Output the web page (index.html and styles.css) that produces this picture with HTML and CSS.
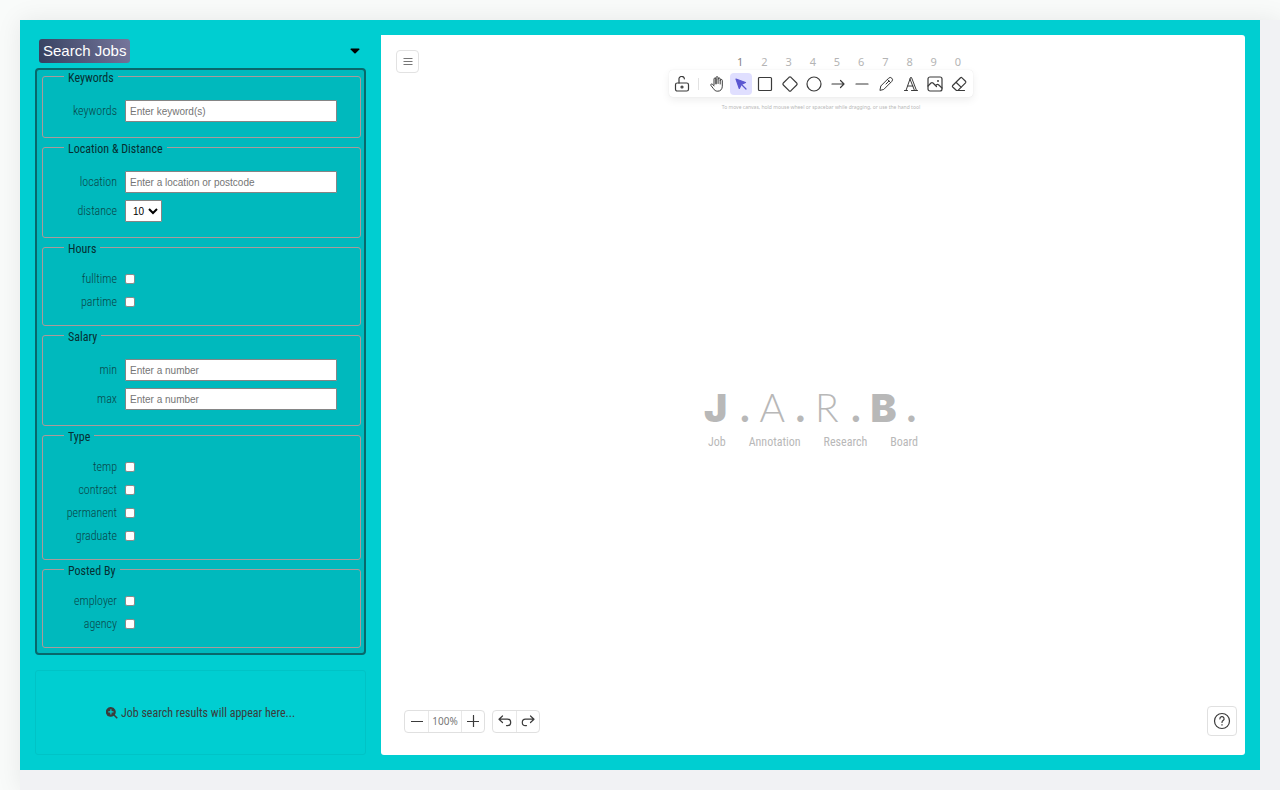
FILE: index.html
```html
<!DOCTYPE html>
<html lang="en">
<head>
<meta charset="utf-8">
<meta name="viewport" content="width=device-width, initial-scale=1">
<title>J.A.R.B.</title>
<link rel="stylesheet" href="styles.css">
</head>
<body>
<div class="page">
<main class="app">
  <section class="sidebar">
    <header class="search-head">
      <button class="search-btn" type="button">Search Jobs</button>
      <button class="toggle" type="button" aria-label="Collapse search form"><svg width="10" height="6" viewBox="0 0 10 6"><path d="M1 .5h8a.6.6 0 0 1 .4 1L5.6 5.3a.9.9 0 0 1-1.2 0L.6 1.500a.6.6 0 0 1 .4-1z"/></svg></button>
    </header>
    <form class="filters">
      <fieldset class="group"><legend>Keywords</legend>
        <div class="row"><label for="keywords">keywords</label><input class="text" id="keywords" type="text" placeholder="Enter keyword(s)"></div>
      </fieldset>
      <fieldset class="group"><legend>Location &amp; Distance</legend>
        <div class="row"><label for="location">location</label><input class="text" id="location" type="text" placeholder="Enter a location or postcode"></div>
        <div class="row"><label for="distance">distance</label><select class="select" id="distance"><option>10</option></select></div>
      </fieldset>
      <fieldset class="group"><legend>Hours</legend>
        <div class="row"><label for="fulltime">fulltime</label><input class="check" id="fulltime" type="checkbox"></div>
        <div class="row"><label for="partime">partime</label><input class="check" id="partime" type="checkbox"></div>
      </fieldset>
      <fieldset class="group"><legend>Salary</legend>
        <div class="row"><label for="min">min</label><input class="text" id="min" type="text" placeholder="Enter a number"></div>
        <div class="row"><label for="max">max</label><input class="text" id="max" type="text" placeholder="Enter a number"></div>
      </fieldset>
      <fieldset class="group"><legend>Type</legend>
        <div class="row"><label for="temp">temp</label><input class="check" id="temp" type="checkbox"></div>
        <div class="row"><label for="contract">contract</label><input class="check" id="contract" type="checkbox"></div>
        <div class="row"><label for="permanent">permanent</label><input class="check" id="permanent" type="checkbox"></div>
        <div class="row"><label for="graduate">graduate</label><input class="check" id="graduate" type="checkbox"></div>
      </fieldset>
      <fieldset class="group"><legend>Posted By</legend>
        <div class="row"><label for="employer">employer</label><input class="check" id="employer" type="checkbox"></div>
        <div class="row"><label for="agency">agency</label><input class="check" id="agency" type="checkbox"></div>
      </fieldset>
    </form>
    <section class="results">
      <svg width="12" height="12" viewBox="0 0 12 12"><path fill="#3b3b3b" fill-rule="evenodd" d="M4.900 0a4.900 4.900 0 0 1 3.900 7.800l3 2.900-1.100 1.100-3-3A4.900 4.900 0 1 1 4.900 0zM4.300 2.300v2h-2v1.200h2v2h1.200v-2h2V4.300h-2v-2z"/></svg>
      <span>Job search results will appear here...</span>
    </section>
  </section>

  <section class="board">
    <header class="board-top">
      <button class="menu" type="button" aria-label="Menu"><svg width="10" height="10" viewBox="0 0 10 10"><path d="M.5 1.500h9M.5 4.500h9M.5 7.500h9" stroke="#777"/></svg></button>
      <div class="tools-wrap">
        <div class="island">
          <button class="tool" type="button" aria-label="Lock"><svg class="icon" viewBox="0 0 16 16"><rect x="1.500" y="7" width="13" height="8" rx="1.800"/><path d="M5 7V3.500a2.700 2.700 0 0 1 5.400-.7"/><circle cx="8" cy="11" r="1"/></svg></button>
          <span class="divider"></span>
          <div class="tools">
            <button class="tool" type="button" aria-label="Hand"><svg class="icon thinner" viewBox="0 0 16 16"><path d="M5 9V3a1 1 0 0 1 2 0v5M7 7.500V1.700a1 1 0 0 1 2.100 0v5.800M9.100 3a1 1 0 0 1 2.100 0v5M11.200 4.500a1 1 0 0 1 2.100 0v5.700c0 3-1.800 5-4.500 5-2.300 0-3.300-.9-4.400-2.600L1.900 9.400c-.6-1 .6-1.800 1.400-1.200L5 9.800"/></svg></button>
            <button class="tool active" type="button" aria-label="Selection"><b class="key">1</b><svg class="icon" viewBox="0 0 16 16"><path class="solid" d="M3 3l3.300 9.500 2-4 4.200-2z"/><path d="M8.500 8.500l4.500 4.500"/></svg></button>
            <button class="tool" type="button" aria-label="Rectangle"><b class="key">2</b><svg class="icon" viewBox="0 0 16 16"><rect x="1.500" y="1.500" width="13" height="13" rx="1"/></svg></button>
            <button class="tool" type="button" aria-label="Diamond"><b class="key">3</b><svg class="icon" viewBox="0 0 16 16"><path d="M7 1.300q1-.8 2 0L14.700 7q.8 1 0 2L9 14.700q-1 .8-2 0L1.300 9q-.8-1 0-2z"/></svg></button>
            <button class="tool" type="button" aria-label="Ellipse"><b class="key">4</b><svg class="icon" viewBox="0 0 16 16"><circle cx="8" cy="8" r="7"/></svg></button>
            <button class="tool" type="button" aria-label="Arrow"><b class="key">5</b><svg class="icon" viewBox="0 0 16 16"><path d="M2 8h12M10.500 4.500L14 8l-3.500 3.500"/></svg></button>
            <button class="tool" type="button" aria-label="Line"><b class="key">6</b><svg class="icon" viewBox="0 0 16 16"><path d="M2 8h12"/></svg></button>
            <button class="tool" type="button" aria-label="Draw"><b class="key">7</b><svg class="icon thinner" viewBox="0 0 16 16"><path d="M2 14l.8-4 7.800-7.800a2.200 2.200 0 0 1 3.200 3.200L6 13.200zM9.500 3.500l3 3M8 8l3-3"/></svg></button>
            <button class="tool" type="button" aria-label="Text"><b class="key">8</b><svg class="icon thinner" viewBox="0 0 16 16"><path d="M1.500 14.500h3M8.500 14.500h6M3 14.500L7.500 1.500h1L13.500 14.500M7 3l4.500 11.500M5 10h5"/></svg></button>
            <button class="tool" type="button" aria-label="Image"><b class="key">9</b><svg class="icon" viewBox="0 0 16 16"><rect x="1" y="1" width="14" height="14" rx="2"/><path d="M1 10l3-3q1-.8 2 0l3.500 3.500M8.500 9.500l1-.8q1-.7 2 0L15 12"/><circle cx="11" cy="5" r=".4"/></svg></button>
            <button class="tool" type="button" aria-label="Eraser"><b class="key">0</b><svg class="icon" viewBox="0 0 16 16"><path d="M13.500 14.500H5.500L1.700 11q-.7-.8 0-1.500L9.500 1.800q.8-.7 1.500 0l3.500 3.400q.7.800 0 1.600L7 14.300M5 6.200l5.300 5.200"/></svg></button>
          </div>
        </div>
        <p class="hint">To move canvas, hold mouse wheel or spacebar while dragging, or use the hand tool</p>
      </div>
    </header>

    <div class="canvas">
      <div class="brand">
        <div class="letters">
          <span class="heavy">J<b class="dot">.</b></span><span class="thin">A<b class="dot">.</b></span><span class="thin">R<b class="dot">.</b></span><span class="heavy">B<b class="dot">.</b></span>
        </div>
        <div class="words"><span>Job</span><span>Annotation</span><span>Research</span><span>Board</span></div>
      </div>
    </div>

    <footer class="board-bottom">
      <div class="zoom">
        <button type="button" aria-label="Zoom out"><svg width="12" height="12" viewBox="0 0 12 12"><path d="M.5 6.500h11"/></svg></button>
        <button class="percent" type="button">100%</button>
        <button type="button" aria-label="Zoom in"><svg width="12" height="12" viewBox="0 0 12 12"><path d="M0 6.500h12M6.500.5v12"/></svg></button>
      </div>
      <div class="zoom">
        <button type="button" aria-label="Undo"><svg width="14" height="12" viewBox="0 0 14 12"><path d="M4.500 7.500L1 4.200 4.500 1M1 4.200h8.500a3.200 3.200 0 0 1 0 6.400H8.500"/></svg></button>
        <button type="button" aria-label="Redo"><svg width="14" height="12" viewBox="0 0 14 12"><path d="M9.500 7.500L13 4.200 9.500 1M13 4.200H4.500a3.200 3.200 0 0 0 0 6.400h1"/></svg></button>
      </div>
      <button class="help" type="button" aria-label="Help"><svg width="18" height="18" viewBox="0 0 18 18"><circle cx="9" cy="9" r="7.500"/><path d="M6.900 6.900A2.100 2.100 0 1 1 10 8.600q-1 .6-1 1.800M9 12.500v.6"/></svg></button>
    </footer>
  </section>
</main>
</div>
</body>
</html>
```
FILE: styles.css
```css
* { box-sizing: border-box; }
body {
  margin: 0;
  padding: 20px 0 0 20px;
  min-height: 100vh;
  background: #f9fbfa;
  overflow-x: hidden;
  font-family: "Roboto Condensed", Roboto, "Liberation Sans", sans-serif;
  font-size: 12px;
  line-height: 16px;
  color: #0a4447;
}
button, input, select { font-family: "Liberation Sans", sans-serif; margin: 0; }
button { border: 0; padding: 0; background: none; color: inherit; }
svg { display: block; flex: none; }

.page {
  min-height: calc(100vh - 20px);
  padding: 0 20px 20px 0;
  background: #f1f2f4;
  box-shadow: 0 0 24px rgba(0, 0, 0, 0.08);
}
.app {
  display: flex;
  gap: 15px;
  min-height: calc(100vh - 40px);
  padding: 15px;
  background: #00ced1;
}

.sidebar { display: flex; flex-direction: column; flex: 0 0 331px; }
.search-head {
  display: flex;
  align-items: center;
  justify-content: space-between;
  height: 33px;
  padding: 0 6px 2px 4px;
}
.search-btn {
  height: 24px;
  padding: 0 4px;
  border-radius: 3px;
  background: linear-gradient(70deg, #34405f, #76769c);
  color: #fff;
  font-size: 15px;
  line-height: 24px;
}
.filters {
  display: flex;
  flex-direction: column;
  gap: 3px;
  padding: 0 3px 5px 5px;
  border: 2px solid #08686b;
  border-radius: 4px;
  background: #00b9bd;
}
.group {
  display: flex;
  flex-direction: column;
  gap: 7px;
  margin: 0;
  min-width: 0;
  padding: 18px 23px 15px 25px;
  border: 1px solid #ab9a9a;
  border-radius: 3px;
}
.group legend {
  margin-left: -4px;
  padding: 0 4px;
  height: 12px;
  line-height: 16px;
  color: #062f32;
}
.row {
  display: grid;
  grid-template-columns: 49px 1fr;
  column-gap: 8px;
  align-items: center;
}
.row label { display: flex; justify-content: flex-end; white-space: nowrap; font-weight: 300; }
.text {
  width: 100%;
  height: 22px;
  padding: 0 4px;
  border: 1px solid #858585;
  border-radius: 1px;
  background: #fff;
  font-size: 10px;
}
.text::placeholder { color: #757575; }
.select {
  width: 37px;
  height: 22px;
  padding: 0 0 0 3px;
  border: 1px solid #858585;
  border-radius: 1px;
  background: #fff;
  color: #000;
  font-size: 10px;
}
.check {
  appearance: none;
  width: 10px;
  height: 10px;
  border: 1px solid #8b8b8b;
  border-radius: 2px;
  background: #fff;
}

.results {
  display: flex;
  flex: 1;
  align-items: center;
  justify-content: center;
  gap: 3px;
  min-height: 85px;
  margin-top: 15px;
  border: 1px solid #00c3c6;
  border-radius: 3px;
  color: #3b3b3b;
}

.board {
  display: flex;
  flex: 1;
  flex-direction: column;
  min-width: 0;
  border-radius: 0 3px 3px 3px;
  background: #fff;
}
.board-top { display: flex; align-items: flex-start; padding: 15px 22px 0 15px; }
.menu {
  display: grid;
  place-items: center;
  width: 23px;
  height: 23px;
  border: 1px solid #e2e2e2;
  border-radius: 4px;
}
.tools-wrap { margin: 20px auto 0; }
.island {
  display: flex;
  align-items: center;
  width: 304px;
  height: 27px;
  padding: 0 2px;
  border-radius: 4px;
  background: #fff;
  box-shadow: 0 0 1px rgba(0, 0, 0, 0.12), 0 3px 8px rgba(0, 0, 0, 0.07);
}
.tool {
  position: relative;
  display: grid;
  place-items: center;
  flex: none;
  width: 22px;
  height: 22px;
  border-radius: 4px;
}
.icon {
  width: 16px;
  height: 16px;
  fill: none;
  stroke: #3b3b3b;
  stroke-width: 1.2;
  stroke-linecap: round;
  stroke-linejoin: round;
}
.thinner { stroke-width: 1; }
.divider { width: 1px; height: 12px; margin: 0 6px 0 5px; background: #e2e2e2; }
.tools { display: grid; flex: 1; grid-template-columns: repeat(11, 1fr); justify-items: center; }
.key {
  position: absolute;
  top: -18px;
  left: 0;
  width: 20px;
  color: #b4b4b4;
  font: 11px/14px "Noto Sans", sans-serif;
  text-align: center;
}
.active { background: #e0dfff; }
.active .key { color: #858585; }
.active .icon { stroke: #5b57d1; }
.active .solid { fill: #5b57d1; }
.hint {
  margin: 5px 0 0;
  color: #b8b8b8;
  font: 5px/10px "Noto Sans", sans-serif;
  text-align: center;
}

.canvas {
  display: grid;
  flex: 1;
  place-items: center;
  padding-top: 18px;
  color: #b8b8b8;
}
.brand { width: 222px; }
.letters {
  display: grid;
  grid-template-columns: repeat(4, 1fr);
  font: 39px/40px Lato, sans-serif;
}
.letters span { display: flex; align-items: baseline; justify-content: space-between; padding: 0 8px 0 2px; }
.letters .heavy { font-family: Inter, sans-serif; font-weight: 900; }
.thin { font-weight: 300; }
.letters .dot { font-family: Lato, sans-serif; font-weight: 900; }
.words { display: flex; justify-content: space-between; margin-top: 6px; padding: 0 6px; }

.board-bottom { display: flex; align-items: center; gap: 7px; padding: 0 8px 19px 23px; }
.zoom { display: flex; border: 1px solid #e0e0e0; border-radius: 4px; }
.zoom button { display: grid; place-items: center; width: 23px; height: 21px; }
.zoom button + button { border-left: 1px solid #e8e8e8; }
.zoom .percent { width: 33px; color: #777; font: 10px/20px "Noto Sans", sans-serif; }
.board-bottom svg { fill: none; stroke: #3b3b3b; stroke-width: 1.2; stroke-linecap: round; stroke-linejoin: round; }
.help {
  display: grid;
  place-items: center;
  width: 30px;
  height: 30px;
  margin-left: auto;
  border: 1px solid #e0e0e0;
  border-radius: 4px;
}
```
